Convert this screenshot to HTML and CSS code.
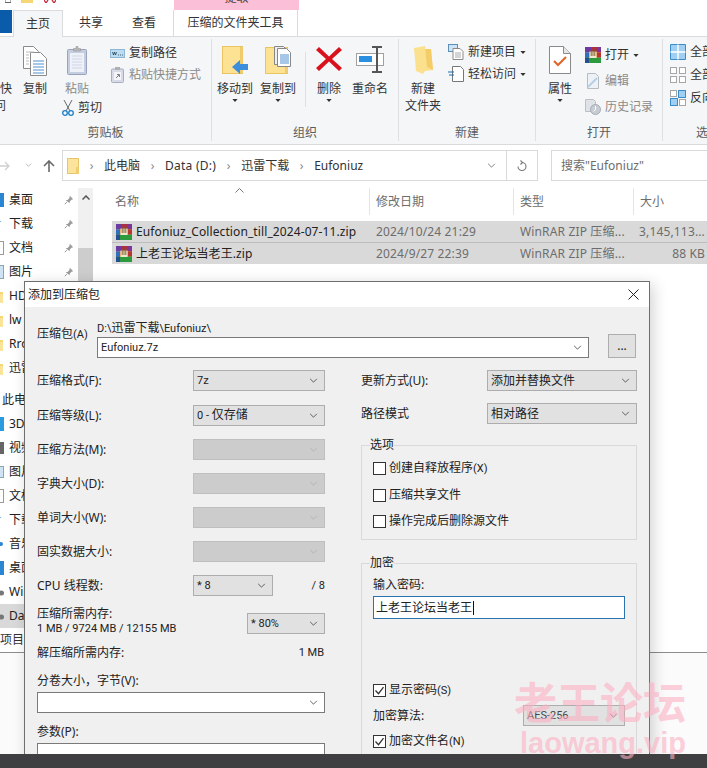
FILE: index.html
```html
<!DOCTYPE html>
<html lang="zh-CN">
<head>
<meta charset="utf-8">
<title>添加到压缩包</title>
<link rel="stylesheet" href="styles.css">
</head>
<body>
<svg class="defs" width="0" height="0" aria-hidden="true">
  <symbol id="chev" viewBox="0 0 10 6"><path d="M1 1l4 4 4-4" fill="none" stroke="currentColor" stroke-width="1"/></symbol>
  <symbol id="rar" viewBox="0 0 16 16">
    <rect width="16" height="5.400" fill="#a8323f"/><rect width="6" height="5.400" fill="#6c3aa0"/><rect x="12" width="4" height="5.400" fill="#7d3596"/>
    <rect y="5.400" width="16" height="5.200" fill="#e2802a"/><rect y="5.400" width="4" height="5.200" fill="#2f6fc0"/><rect x="12" y="5.400" width="4" height="5.200" fill="#b7372f"/>
    <rect y="10.600" width="16" height="5.400" fill="#2e9a3e"/><rect y="10.600" width="4" height="5.400" fill="#25508f"/>
    <path d="M4.500 4.500h7v6.500H4.500z" fill="#efe7cf"/><path d="M6.200 3v6M8 3v6M9.800 3v6" stroke="#7a5a2a" stroke-width=".9"/>
  </symbol>
  <symbol id="pin" viewBox="0 0 12 12"><path d="M7 1l4 4-2 .6-2 2.200-.2 2.200L2 6.200l2.200-.2 2.200-2z" fill="#9a9a9a"/><path d="M3.500 8.500L1 11" stroke="#9a9a9a" stroke-width="1.200"/></symbol>
  <symbol id="fold" viewBox="0 0 12 14"><path d="M0 2h5l1 1h6v11H0z" fill="#f7d774"/><path d="M0 5h12v9H0z" fill="#fbe39a"/></symbol>
  <symbol id="doc" viewBox="0 0 22 28"><path d="M.5.500h14l7 7v20H.500z" fill="#fff" stroke="#8a8a8a"/><path d="M14.500.500v7h7" fill="#e6e6e6" stroke="#8a8a8a"/></symbol>
  <symbol id="tinycheck" viewBox="0 0 13 13"><path d="M2.500 6.500l3 3.200 5-6.500" fill="none" stroke="#333" stroke-width="1.300"/></symbol>
  <symbol id="caret" viewBox="0 0 7 4"><path d="M0 0h7L3.500 4z" fill="#333"/></symbol>
</svg>

<div class="explorer">
  <div class="titlebar">
    <svg class="tb-box" width="6" height="3" viewBox="0 0 6 3"><path d="M0 0v2.500h6V0" fill="#fff" stroke="#666"/></svg>
    <svg class="tb-folder" width="12" height="3" viewBox="0 0 12 3"><rect width="12" height="3" fill="#f7d774"/></svg>
    <svg class="tb-red" width="12" height="3" viewBox="0 0 12 3"><path d="M0 0l2 3 2-3M8 0l2 3 2-3" fill="none" stroke="#c8283c" stroke-width="1.300"/></svg>
    <div class="tb-context"><span>提取</span></div>
  </div>
  <div class="tabs">
    <div class="tab-file"></div>
    <div class="tab tab-home">主页</div>
    <div class="tab tab-share">共享</div>
    <div class="tab tab-view">查看</div>
    <div class="tab tab-tools">压缩的文件夹工具</div>
  </div>

  <div class="ribbon">
    <section class="group g-clip">
      <div class="group-body">
        <div class="big big-quick"><span class="big-icon"></span><span>固定到快<br>速访问</span></div>
        <div class="big big-copy">
          <span class="big-icon">
            <svg width="24" height="30" viewBox="0 0 24 30"><g stroke="#8a8a8a" fill="#fff"><path d="M.5.500h10l5 5v17H.500z"/><path d="M7.500 6.500h10l6 6v17h-16z"/></g><path d="M10 15h11M10 18h11M10 21h11M10 24h11M10 27h11" stroke="#4f8fd0"/><path d="M3 6h8M3 9h3M3 12h3M3 15h3M3 18h3" stroke="#b9b9b9"/></svg>
          </span><span>复制</span>
        </div>
        <div class="col-paste">
          <div class="big big-paste">
            <span class="big-icon">
              <svg width="20" height="29" viewBox="0 0 20 29"><rect x=".5" y="3.500" width="19" height="25" rx="1" fill="#c5cde0" stroke="#9aa3bb"/><rect x="3" y="7" width="14" height="19" fill="#eef1f7"/><path d="M5 10h10M5 13h10M5 16h10M5 19h10M5 22h10" stroke="#cfd6e6"/><path d="M6.500 5V2.500h2.500V.500h2V2.500h2.500V5z" fill="#b7b7b7" stroke="#9a9a9a" stroke-width=".6"/></svg>
            </span><span class="dim">粘贴</span>
          </div>
          <div class="small small-cut">
            <svg width="12" height="16" viewBox="0 0 12 16"><path d="M10 0L4 11M2 0l6 11" stroke="#6a6a6a" stroke-width="1" fill="none"/><circle cx="3" cy="13" r="2.300" fill="none" stroke="#1d7fc4" stroke-width="1.300"/><circle cx="9" cy="13" r="2.300" fill="none" stroke="#1d7fc4" stroke-width="1.300"/></svg>
            <span>剪切</span>
          </div>
        </div>
        <div class="small-col col-path">
          <div class="small">
            <svg width="15" height="9" viewBox="0 0 15 9"><rect x=".5" y=".5" width="14" height="8" fill="#bcdcf3" stroke="#8fb5d4"/><path d="M2.500 3l1 3 1-3 1 3 1-3M8 6h1M10 6h1M12 6h1" fill="none" stroke="#245" stroke-width=".8"/></svg>
            <span>复制路径</span>
          </div>
          <div class="small dim">
            <svg width="15" height="16" viewBox="0 0 13 16"><rect x=".5" y="2" width="12" height="13.500" rx="1" fill="#d6dbe6" stroke="#a7aec0"/><rect x="3" y="5" width="7" height="8" fill="#f2f4f8"/><path d="M5 11l3-3M6 7.500h2.500V10" fill="none" stroke="#7a7f8a"/><rect x="4" y="0" width="5" height="3" fill="#b0b0b0"/></svg>
            <span>粘贴快捷方式</span>
          </div>
        </div>
      </div>
      <div class="group-label">剪贴板</div>
    </section>

    <section class="group g-org">
      <div class="group-body">
        <div class="big big-move">
          <span class="big-icon">
            <svg width="27" height="30" viewBox="0 0 27 30"><rect x=".5" y=".5" width="20" height="27" fill="#fde293" stroke="#e8c462"/><rect x="18" y="1" width="3" height="26" fill="#efcb6d"/><path d="M10 21l8-7v4h8v6h-8v4z" fill="#3d8fdc"/></svg>
          </span><span>移动到</span>
          <svg class="caret" width="6" height="3"><use href="#caret"/></svg>
        </div>
        <div class="big big-copyto">
          <span class="big-icon">
            <svg width="27" height="28" viewBox="0 0 27 28"><rect x=".5" y="1.500" width="22" height="26" fill="#fde293" stroke="#e8c462"/><rect x="20" y="2" width="3" height="25" fill="#efcb6d"/><path d="M9.500 .5h9l6 6v12h-15z" fill="#eee" stroke="#888"/><path d="M12.500 2.500h9l4 4v14h-13z" fill="#fff" stroke="#888"/><path d="M15 9h9M15 11h9M15 13h9M15 15h9M15 17h9" stroke="#4f8fd0"/></svg>
          </span><span>复制到</span>
          <svg class="caret" width="6" height="3"><use href="#caret"/></svg>
        </div>
        <div class="vsep"></div>
        <div class="big big-delete">
          <span class="big-icon">
            <svg width="26" height="26" viewBox="0 0 26 26"><path d="M3 1l10 9.500L23 1l3 3-10 9 10 9-3 3-10-9.500L3 25l-3-3 10-9L0 4z" fill="#d9111c"/></svg>
          </span><span>删除</span>
          <svg class="caret" width="6" height="3"><use href="#caret"/></svg>
        </div>
        <div class="big big-rename">
          <span class="big-icon">
            <svg width="28" height="27" viewBox="0 0 28 27"><rect x=".5" y="7.500" width="27" height="12" fill="#fff" stroke="#a0a0a0"/><rect x="3" y="10" width="13" height="6" fill="#2a8fe0"/><path d="M16 1h10M21 1v25M16 26h10" fill="none" stroke="#555" stroke-width="2"/></svg>
          </span><span>重命名</span>
        </div>
      </div>
      <div class="group-label">组织</div>
    </section>

    <section class="group g-new">
      <div class="group-body">
        <div class="big big-newfolder">
          <span class="big-icon">
            <svg width="19" height="28" viewBox="0 0 19 28"><path d="M0 2l11-2v3h6l2 21-8 1-2 3-7-3z" fill="#fbe08e"/><path d="M11 0l2 21 6 3-2-21h-6z" fill="#f4cd68"/></svg>
          </span><span>新建<br>文件夹</span>
        </div>
        <div class="small-col col-newitems">
          <div class="small">
            <svg width="16" height="16" viewBox="0 0 16 16"><rect x=".5" y=".5" width="9" height="7" fill="#cfe3f4" stroke="#5b8fb8"/><path d="M5 4.500h7l3 3v8H5z" fill="#fff" stroke="#8a8a8a"/><path d="M7 9h6M7 11h6M7 13h6" stroke="#aaa"/></svg>
            <span>新建项目</span>
            <svg class="caret" width="6" height="3"><use href="#caret"/></svg>
          </div>
          <div class="small">
            <svg width="16" height="16" viewBox="0 0 16 16"><path d="M4.500.500h8l3 3v12h-11z" fill="#fff" stroke="#777"/><path d="M0 6h6M1 9h5" stroke="#1a6fb5" stroke-width="1.200"/></svg>
            <span>轻松访问</span>
            <svg class="caret" width="6" height="3"><use href="#caret"/></svg>
          </div>
        </div>
      </div>
      <div class="group-label">新建</div>
    </section>

    <section class="group g-open">
      <div class="group-body">
        <div class="big big-props">
          <span class="big-icon">
            <svg width="22" height="28" viewBox="0 0 22 28"><use href="#doc" width="22" height="28"/><path d="M5 15l4 4 8-8" fill="none" stroke="#e0642a" stroke-width="2"/></svg>
          </span><span>属性</span>
          <svg class="caret" width="6" height="3"><use href="#caret"/></svg>
        </div>
        <div class="small-col col-open">
          <div class="small">
            <svg width="16" height="16"><use href="#rar"/></svg>
            <span>打开</span>
            <svg class="caret" width="6" height="3"><use href="#caret"/></svg>
          </div>
          <div class="small dim">
            <svg width="16" height="16" viewBox="0 0 16 16"><path d="M2.500.500h8l3 3v12h-11z" fill="#eef2f6" stroke="#b7bcc2"/><path d="M3 14l9-9" stroke="#b6cfe4" stroke-width="2"/></svg>
            <span>编辑</span>
          </div>
          <div class="small dim">
            <svg width="16" height="16" viewBox="0 0 16 16"><path d="M.5.500h8l2 2v10H.500z" fill="#dfe3e8" stroke="#bcc0c6"/><circle cx="10.500" cy="10.500" r="5" fill="#c7ccd2" stroke="#a7acb3"/><path d="M10.500 7v3.500l-2 2" fill="none" stroke="#fff"/></svg>
            <span>历史记录</span>
          </div>
        </div>
      </div>
      <div class="group-label">打开</div>
    </section>

    <section class="group g-select">
      <div class="group-body">
        <div class="small-col col-select">
          <div class="small">
            <svg width="16" height="16" viewBox="0 0 16 16"><path d="M.5.500h15v15H.500z" fill="#9fd0f3" stroke="#3b8cc8"/><path d="M8 .5v15M.5 8h15" stroke="#fff" stroke-width="1.400"/></svg>
            <span>全部选择</span>
          </div>
          <div class="small">
            <svg width="16" height="16" viewBox="0 0 16 16"><g fill="#fff" stroke="#a6a6a6"><rect x=".5" y=".5" width="6" height="6"/><rect x="9.500" y=".5" width="6" height="6"/><rect x=".5" y="9.500" width="6" height="6"/><rect x="9.500" y="9.500" width="6" height="6"/></g></svg>
            <span>全部取消</span>
          </div>
          <div class="small">
            <svg width="16" height="16" viewBox="0 0 16 16"><g stroke="#3b8cc8" fill="#9fd0f3"><rect x="8.500" y=".5" width="7" height="7"/><rect x=".5" y="8.500" width="7" height="7"/></g><g fill="#fff" stroke="#a6a6a6"><rect x=".5" y=".5" width="6" height="6"/><rect x="9.500" y="9.500" width="6" height="6"/></g></svg>
            <span>反向选择</span>
          </div>
        </div>
      </div>
      <div class="group-label">选择</div>
    </section>
  </div>

  <div class="addressrow">
    <svg class="nav-back" width="10" height="10" viewBox="0 0 10 10"><path d="M0 5h9M5 1l4 4-4 4" fill="none" stroke="#cfcfcf" stroke-width="1.300"/></svg>
    <svg class="nav-down" width="7" height="4" viewBox="0 0 10 6"><use href="#chev" width="10" height="6"/></svg>
    <svg class="nav-up" width="12" height="12" viewBox="0 0 12 12"><path d="M6 12V1M1 6l5-5 5 5" fill="none" stroke="#6a6a6a" stroke-width="1.600"/></svg>
    <div class="addressbox">
      <svg class="addr-folder" width="12" height="16" viewBox="0 0 12 16"><rect x=".5" y=".5" width="11" height="15" fill="#fce49c" stroke="#e6c56d"/><rect x="9" y="9" width="3" height="7" fill="#f0cd70"/></svg>
      <span class="crumb-sep">›</span><span class="crumb">此电脑</span>
      <span class="crumb-sep">›</span><span class="crumb crumb-data">Data (D:)</span>
      <span class="crumb-sep">›</span><span class="crumb">迅雷下载</span>
      <span class="crumb-sep">›</span><span class="crumb">Eufoniuz</span>
      <span class="addr-fill"></span>
      <span class="addr-drop"><svg width="9" height="5"><use href="#chev"/></svg></span>
      <span class="addr-refresh">
        <svg width="10" height="12" viewBox="0 0 10 12"><path d="M5 2.500a4 4 0 1 1-4 4M3.500.5L5.500 2.500 3.500 4.500" fill="none" stroke="#777" stroke-width="1.100"/></svg>
      </span>
    </div>
    <div class="searchbox">搜索"Eufoniuz"</div>
  </div>

  <div class="main">
    <nav class="sidebar">
      <div class="side-list">
        <div class="side-item"><svg class="ic" width="14" height="14"><rect width="14" height="14" fill="#2b86d2"/></svg><span>桌面</span><svg class="pin" width="10" height="10"><use href="#pin"/></svg></div>
        <div class="side-item"><svg class="ic" width="14" height="14" viewBox="0 0 14 14"><path d="M3 4h8l-4 5z" fill="#2b86d2"/></svg><span>下载</span><svg class="pin" width="10" height="10"><use href="#pin"/></svg></div>
        <div class="side-item"><svg class="ic" width="14" height="14"><rect x=".5" y=".5" width="13" height="13" fill="#fff" stroke="#999"/></svg><span>文档</span><svg class="pin" width="10" height="10"><use href="#pin"/></svg></div>
        <div class="side-item"><svg class="ic" width="14" height="14"><rect x=".5" y=".5" width="13" height="13" fill="#cfe3f4" stroke="#8aa"/></svg><span>图片</span><svg class="pin" width="10" height="10"><use href="#pin"/></svg></div>
        <div class="side-item"><svg class="ic" width="14" height="14"><use href="#fold"/></svg><span>HD</span></div>
        <div class="side-item"><svg class="ic" width="14" height="14"><use href="#fold"/></svg><span>lw</span></div>
        <div class="side-item"><svg class="ic" width="14" height="14"><use href="#fold"/></svg><span>Rro</span></div>
        <div class="side-item"><svg class="ic" width="14" height="14"><use href="#fold"/></svg><span>迅雷下载</span></div>
        <div class="side-item side-pc"><span>此电脑</span></div>
        <div class="side-item"><svg class="ic" width="14" height="14"><rect width="14" height="14" fill="#2b9be0"/></svg><span>3D 对象</span></div>
        <div class="side-item"><svg class="ic" width="14" height="14"><rect x="9" y="1" width="5" height="12" fill="#666"/></svg><span>视频</span></div>
        <div class="side-item"><svg class="ic" width="14" height="14"><rect x=".5" y="1.500" width="13" height="11" fill="#cfe3f4" stroke="#8aa"/></svg><span>图片</span></div>
        <div class="side-item"><svg class="ic" width="14" height="14"><rect x=".5" y=".5" width="13" height="13" fill="#fff" stroke="#999"/></svg><span>文档</span></div>
        <div class="side-item"><svg class="ic" width="14" height="14" viewBox="0 0 14 14"><path d="M3 4h8l-4 5z" fill="#2b86d2"/></svg><span>下载</span></div>
        <div class="side-item"><svg class="ic" width="14" height="14"><circle cx="11" cy="7" r="2" fill="#2b86d2"/></svg><span>音乐</span></div>
        <div class="side-item"><svg class="ic" width="14" height="14"><rect width="14" height="14" fill="#2b86d2"/></svg><span>桌面</span></div>
        <div class="side-item"><svg class="ic" width="14" height="14"><circle cx="11.500" cy="8" r="2.500" fill="#777"/></svg><span>Windows (C:)</span></div>
        <div class="side-item side-selected"><svg class="ic" width="14" height="14"><circle cx="11.500" cy="8" r="2.500" fill="#777"/></svg><span>Data (D:)</span></div>
      </div>
      <div class="side-scroll">
        <svg class="scroll-up" width="8" height="5" viewBox="0 0 8 5"><path d="M.5 4.500L4 1l3.500 3.500" fill="none" stroke="#555" stroke-width="1.500"/></svg>
        <div class="scroll-thumb"></div>
      </div>
    </nav>
    <div class="files">
      <svg class="sort-caret" width="9" height="5" viewBox="0 0 9 5"><path d="M.5 4.500l4-4 4 4" fill="none" stroke="#777"/></svg>
      <div class="file-head">
        <div class="th th-name">名称</div>
        <div class="th">修改日期</div>
        <div class="th">类型</div>
        <div class="th th-last">大小</div>
      </div>
      <div class="file-row">
        <div class="td td-name"><svg width="16" height="16"><use href="#rar"/></svg><span>Eufoniuz_Collection_till_2024-07-11.zip</span></div>
        <div class="td">2024/10/24 21:29</div>
        <div class="td">WinRAR ZIP 压缩...</div>
        <div class="td td-size">3,145,113...</div>
      </div>
      <div class="file-row">
        <div class="td td-name"><svg width="16" height="16"><use href="#rar"/></svg><span>上老王论坛当老王.zip</span></div>
        <div class="td">2024/9/27 22:39</div>
        <div class="td">WinRAR ZIP 压缩...</div>
        <div class="td td-size">88 KB</div>
      </div>
    </div>
  </div>
  <div class="statusbar">2 个项目</div>
</div>

<div class="spacer"></div>
<div class="taskbar"></div>

<div class="dialog">
  <div class="dlg-title">
    <span>添加到压缩包</span>
    <svg width="11" height="11" viewBox="0 0 11 11"><path d="M.5.500l10 10M10.500.500l-10 10" stroke="#222" stroke-width="1"/></svg>
  </div>
  <div class="dlg-body">
    <div class="archive-row">
      <div class="archive-label">压缩包<span class="lat">(A)</span></div>
      <div class="archive-main">
        <div class="archive-path"><span class="lat">D:\</span>迅雷下载<span class="lat">\Eufoniuz\</span></div>
        <div class="combo combo-white"><span class="lat">Eufoniuz.7z</span><svg width="9" height="5"><use href="#chev"/></svg></div>
      </div>
      <div class="browse">...</div>
    </div>

    <div class="dlg-cols">
      <div class="col-left">
        <div class="field field-first"><label>压缩格式(F):</label><div class="combo"><span class="lat">7z</span><svg width="9" height="5"><use href="#chev"/></svg></div></div>
        <div class="field"><label>压缩等级(L):</label><div class="combo"><span><span class="lat">0 - </span>仅存储</span><svg width="9" height="5"><use href="#chev"/></svg></div></div>
        <div class="field"><label>压缩方法(M):</label><div class="combo combo-off"><span></span><svg width="9" height="5"><use href="#chev"/></svg></div></div>
        <div class="field"><label>字典大小(D):</label><div class="combo combo-off"><span></span><svg width="9" height="5"><use href="#chev"/></svg></div></div>
        <div class="field"><label>单词大小(W):</label><div class="combo combo-off"><span></span><svg width="9" height="5"><use href="#chev"/></svg></div></div>
        <div class="field"><label>固实数据大小:</label><div class="combo combo-off"><span></span><svg width="9" height="5"><use href="#chev"/></svg></div></div>
        <div class="field field-cpu"><label>CPU 线程数:</label><div class="combo combo-cpu"><span class="lat">* 8</span><svg width="9" height="5"><use href="#chev"/></svg></div><span class="cpu-total lat">/ 8</span></div>
        <div class="field-mem">
          <div class="mem-text"><div>压缩所需内存:</div><div class="lat">1 MB / 9724 MB / 12155 MB</div></div>
          <div class="combo combo-mem"><span class="lat">* 80%</span><svg width="9" height="5"><use href="#chev"/></svg></div>
        </div>
        <div class="field-decomp"><span>解压缩所需内存:</span><span class="lat">1 MB</span></div>
        <div class="stack-label stack-vol">分卷大小，字节(V):</div>
        <div class="combo combo-white"><span></span><svg width="9" height="5"><use href="#chev"/></svg></div>
        <div class="stack-label stack-param">参数(P):</div>
        <div class="combo combo-white combo-param"></div>
      </div>

      <div class="col-right">
        <div class="field"><label>更新方式(U):</label><div class="combo combo-wide"><span>添加并替换文件</span><svg width="9" height="5"><use href="#chev"/></svg></div></div>
        <div class="field field-path"><label>路径模式</label><div class="combo combo-wide"><span>相对路径</span><svg width="9" height="5"><use href="#chev"/></svg></div></div>
        <fieldset class="box box-options">
          <legend>选项</legend>
          <div class="check check-1"><span class="cb"></span><span>创建自释放程序<span class="lat">(X)</span></span></div>
          <div class="check check-2"><span class="cb"></span><span>压缩共享文件</span></div>
          <div class="check check-3"><span class="cb"></span><span>操作完成后删除源文件</span></div>
        </fieldset>
        <fieldset class="box box-encrypt">
          <legend>加密</legend>
          <div class="pw-label">输入密码:</div>
          <div class="pw-input">上老王论坛当老王<span class="pw-cursor"></span></div>
          <div class="check check-show"><span class="cb"><svg width="13" height="13"><use href="#tinycheck"/></svg></span><span>显示密码<span class="lat">(S)</span></span></div>
          <div class="algo"><span>加密算法:</span><div class="combo combo-algo"><span class="lat">AES-256</span><svg width="9" height="5"><use href="#chev"/></svg></div></div>
          <div class="check check-names"><span class="cb"><svg width="13" height="13"><use href="#tinycheck"/></svg></span><span>加密文件名<span class="lat">(N)</span></span></div>
        </fieldset>
      </div>
    </div>
  </div>
</div>

<div class="watermark">
  <div class="wm-cn">老王论坛</div>
  <div class="wm-en">laowang.vip</div>
</div>
</body>
</html>
```

FILE: styles.css
```css
* { box-sizing: border-box; }
html, body { margin: 0; padding: 0; }
body {
  width: 707px;
  height: 768px;
  overflow: hidden;
  position: relative;
  display: flex;
  flex-direction: column;
  background: #fbfbfb;
  color: #222;
  font: 12px/14px "Noto Sans", "Noto Sans CJK SC", sans-serif;
}
.defs { position: absolute; }
svg { display: block; flex: none; }
.lat { font-family: Roboto, "Noto Sans", sans-serif; font-size: 11px; }

/* explorer window */
.explorer {
  width: 100%;
  height: 653px;
  flex: none;
  display: flex;
  flex-direction: column;
  background: #fff;
  border-bottom: 1px solid #8c8c8c;
  overflow: hidden;
}
.titlebar { height: 10px; display: flex; flex: none; align-items: flex-start; }
.tb-box { margin-left: 5px; }
.tb-folder { margin-left: 10px; }
.tb-red { margin-left: 11px; }
.tb-context {
  margin-left: 118px;
  width: 125px;
  height: 10px;
  background: #fbc0d8;
  text-align: center;
  overflow: hidden;
}
.tb-context span { display: block; margin-top: -9px; color: #444; }

.tabs { height: 26px; display: flex; flex: none; }
.tab-file { width: 12px; height: 23px; background: #0a5cab; }
.tab {
  text-align: center;
  line-height: 24px;
  padding-top: 1px;
  color: #333;
}
.tab-home {
  margin-left: 1px;
  width: 50px;
  height: 27px;
  background: #f5f6f7;
  border: 1px solid #dadbdc;
  border-bottom: none;
  position: relative;
  z-index: 1;
}
.tab-share { width: 56px; }
.tab-view { width: 50px; }
.tab-tools {
  margin-left: 4px;
  width: 125px;
  border-left: 1px solid #dadbdc;
  border-right: 1px solid #dadbdc;
}

.ribbon {
  height: 109px;
  flex: none;
  display: flex;
  background: #f5f6f7;
  border-top: 1px solid #dadbdc;
  border-bottom: 1px solid #dadbdc;
  overflow: hidden;
}
.group {
  flex: none;
  margin: 2px 0 3px;
  display: flex;
  flex-direction: column;
  border-right: 1px solid #dfe0e1;
  color: #333;
}
.group-body { flex: 1; display: flex; min-height: 0; padding-top: 4px; }
.group-label {
  height: 15px;
  line-height: 14px;
  text-align: center;
  color: #5c5c5c;
}
.g-clip { width: 212px; }
.g-org { width: 187px; }
.g-new { width: 137px; }
.g-open { width: 127px; }
.g-select { width: 90px; border-right: none; }

.big {
  flex: none;
  display: flex;
  flex-direction: column;
  align-items: center;
  text-align: center;
  line-height: 17px;
}
.big-icon { height: 37px; display: flex; align-items: flex-start; justify-content: center; padding-top: 3px; }
.caret { margin-top: 2px; }
.big-quick { width: 48px; margin-left: -36px; }
.big-copy { width: 46px; }
.col-paste { width: 50px; flex: none; }
.big-paste { width: 38px; }
.small-cut { margin: 0 0 0 4px; }
.col-path { margin: -1px 0 0 2px; }
.big-move { width: 36px; margin-left: 5px; }
.big-copyto { width: 36px; margin-left: 7px; }
.vsep { width: 1px; height: 55px; background: #dfe0e1; margin: 9px 0 0 9px; flex: none; }
.big-delete { width: 36px; margin-left: 5px; }
.big-rename { width: 36px; margin-left: 5px; }
.big-newfolder { width: 48px; }
.col-newitems { margin: -2px 0 0 1px; }
.big-props { width: 36px; margin-left: 6px; }
.col-open { margin: -1px 0 0 7px; }
.col-open .small { height: 26px; }
.col-select { margin: -3px 0 0 7px; }
.col-select .small { height: 23px; }

.small-col { flex: none; display: flex; flex-direction: column; }
.small {
  height: 22px;
  display: flex;
  align-items: center;
  gap: 4px;
  white-space: nowrap;
}
.small .caret { margin: 0; }
.dim { color: #8a8a8a; }

/* address row */
.addressrow {
  height: 43px;
  flex: none;
  display: flex;
  align-items: flex-start;
  padding-top: 5px;
}
.nav-back { margin: 11px 0 0 0; }
.nav-down { margin: 13px 0 0 15px; color: #9a9a9a; }
.nav-up { margin: 10px 0 0 11px; }
.addressbox {
  margin-left: 7px;
  width: 476px;
  height: 31px;
  border: 1px solid #d9d9d9;
  display: flex;
  align-items: center;
  padding-left: 4px;
}
.crumb { flex: none; color: #333; }
.crumb-data { letter-spacing: .25px; }
.crumb-sep { width: 25px; text-align: center; color: #888; flex: none; }
.addr-fill { flex: 1; }
.addr-drop { width: 30px; height: 100%; display: flex; align-items: center; justify-content: center; color: #666; border-right: 1px solid #d9d9d9; }
.addr-refresh { width: 30px; display: flex; align-items: center; justify-content: center; }
.searchbox {
  margin-left: 13px;
  flex: 1;
  height: 31px;
  border: 1px solid #d9d9d9;
  border-right: none;
  line-height: 29px;
  padding-left: 9px;
  color: #6d6d6d;
}

/* body of explorer */
.main { flex: 1; display: flex; min-height: 0; position: relative; }
.sidebar { width: 93px; flex: none; display: flex; overflow: hidden; }
.side-list { width: 78px; flex: none; }
.side-item {
  width: 78px;
  height: 24px;
  display: flex;
  align-items: center;
  white-space: nowrap;
  position: relative;
  overflow: hidden;
}
.side-item .ic { margin-left: -10px; margin-right: 5px; }
.side-item .pin { position: absolute; left: 64px; top: 7px; }
.side-pc { margin-top: 8px; padding-left: 2px; }
.side-selected { background: #d9d9d9; }
.side-scroll { width: 15px; flex: none; background: #f0f0f0; display: flex; flex-direction: column; align-items: center; }
.scroll-up { margin-top: 7px; }
.scroll-thumb { width: 15px; flex: 1; margin-top: 48px; background: #cdcdcd; }

.files { flex: 1; min-width: 0; position: relative; }
.sort-caret { position: absolute; left: 142px; top: 0; }
.file-head {
  height: 27px;
  display: grid;
  grid-template-columns: 277px 144px 120px 73px;
  color: #6d6d6d;
}
.th { padding-left: 6px; line-height: 27px; border-right: 1px solid #e5e5e5; }
.th-name { padding-left: 22px; }
.th-last { border-right: none; }
.file-row {
  margin: 6px 0 0 19px;
  height: 21px;
  display: grid;
  grid-template-columns: 258px 144px 120px 73px;
  background: #d9d9d9;
  color: #6d6d6d;
  line-height: 21px;
  white-space: nowrap;
  letter-spacing: .15px;
}
.file-row + .file-row { margin-top: 1px; box-shadow: 0 -1px 0 #bdbdbd; }
.td { padding-left: 6px; overflow: hidden; }
.td-name { padding-left: 4px; display: flex; align-items: center; gap: 4px; color: #222; letter-spacing: .1px; }
.td-size { text-align: right; padding: 0 2px 0 0; }
.statusbar { height: 24px; flex: none; line-height: 24px; margin-left: -22px; color: #333; white-space: nowrap; }

.spacer { flex: 1; }
.taskbar { height: 14px; flex: none; background: #3f3f41; position: relative; z-index: 2; }

/* dialog */
.dialog {
  position: absolute;
  left: 24px;
  top: 281px;
  width: 626px;
  height: 480px;
  background: #f0f0f0;
  border: 1px solid #6e6e6e;
  box-shadow: 3px 3px 14px rgba(0, 0, 0, .18);
  overflow: hidden;
  color: #222;
}
.dlg-title {
  height: 25px;
  background: #fff;
  display: flex;
  align-items: center;
  justify-content: space-between;
  padding: 0 10px 0 3px;
}
.dlg-body { padding: 13px 12px 0; }
.archive-row { display: flex; align-items: flex-end; height: 38px; }
.archive-label { width: 60px; flex: none; align-self: flex-start; margin-top: 7px; }
.archive-main { width: 492px; flex: none; }
.archive-path { height: 16px; line-height: 14px; }
.browse {
  margin-left: 19px;
  width: 28px;
  height: 24px;
  background: #e1e1e1;
  border: 1px solid #adadad;
  text-align: center;
  line-height: 22px;
  flex: none;
}
.combo {
  height: 21px;
  background: #e1e1e1;
  border: 1px solid #adadad;
  display: flex;
  align-items: center;
  justify-content: space-between;
  padding: 0 6px 0 3px;
  color: #222;
  white-space: nowrap;
}
.combo svg { color: #444; }
.combo-white { background: #fff; border-color: #7a7a7a; }
.combo-off { background: #cccccc; border-color: #bfbfbf; }
.combo-off svg { color: #b0b0b0; }
.dlg-cols { display: flex; margin-top: 12px; }
.col-left { width: 288px; flex: none; }
.col-right { width: 276px; margin-left: 36px; flex: none; }
.field { height: 21px; margin-bottom: 13px; display: flex; align-items: center; justify-content: space-between; }
.field-first { margin-bottom: 14px; }
.field label { white-space: nowrap; }
.field .combo { width: 132px; }
.field-cpu { justify-content: flex-start; margin-bottom: 10px; }
.field-cpu label { width: 156px; }
.field .combo-cpu { width: 80px; }
.cpu-total { margin-left: auto; }
.field-mem { display: flex; justify-content: space-between; align-items: flex-end; height: 30px; }
.mem-text { line-height: 15px; }
.combo-mem { width: 78px; margin-bottom: 2px; }
.field-decomp { display: flex; justify-content: space-between; margin-top: 10px; padding-right: 1px; height: 16px; }
.stack-label { line-height: 14px; }
.stack-vol { margin-top: 12px; margin-bottom: 4px; }
.stack-param { margin-top: 12px; margin-bottom: 4px; }
.combo-param { height: 30px; }

.col-right .field { margin-bottom: 12px; }
.field-path { margin-bottom: 0 !important; }
.col-right .combo-wide { width: 150px; }
.box {
  margin: 14px 0 0;
  padding: 0 11px;
  border: 1px solid #d9d9d9;
  min-inline-size: 0;
}
.box legend { padding: 0; margin-left: -3px; line-height: 14px; }
.box-options { height: 102px; }
.box-encrypt { margin-top: 16px; height: 240px; }
.check { display: flex; align-items: center; gap: 3px; height: 14px; white-space: nowrap; }
.cb { width: 13px; height: 13px; border: 1px solid #333; background: #fff; flex: none; display: block; }
.cb svg { margin: -1px; }
.check-1 { margin-top: 9px; }
.check-2 { margin-top: 13px; }
.check-3 { margin-top: 12px; }
.pw-label { margin-top: 8px; }
.pw-input {
  margin-top: 4px;
  width: 252px;
  height: 23px;
  border: 1px solid #2a73ae;
  background: #fff;
  line-height: 21px;
  padding-left: 2px;
  display: flex;
  align-items: center;
}
.pw-cursor { width: 1px; height: 14px; background: #111; display: block; margin-left: 1px; }
.check-show { margin-top: 64px; }
.algo { margin-top: 8px; width: 252px; display: flex; align-items: center; justify-content: space-between; }
.combo-algo { width: 102px; color: #444; }
.check-names { margin-top: 8px; }

/* watermark */
.watermark {
  position: absolute;
  left: 514px;
  top: 675px;
  z-index: 3;
  color: rgba(252, 176, 196, .62);
  white-space: nowrap;
  pointer-events: none;
}
.wm-cn { font: 700 43px/50px "Noto Sans CJK SC", sans-serif; }
.wm-en { font: 700 29px/30px "Liberation Sans", sans-serif; margin-top: 3px; padding-left: 6px; }
```
